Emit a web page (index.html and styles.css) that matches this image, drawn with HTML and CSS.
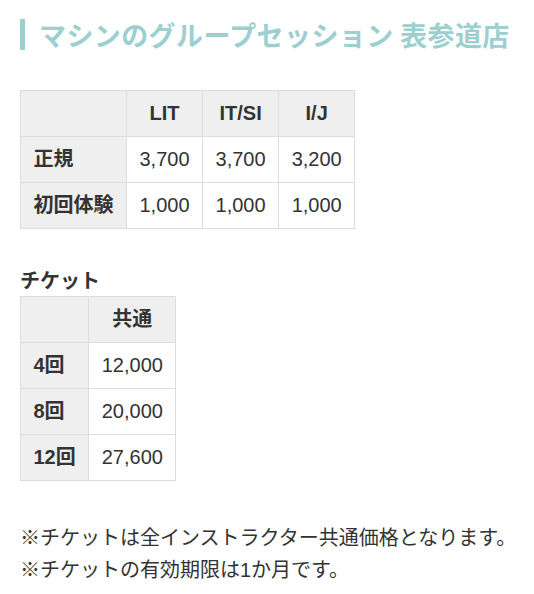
FILE: index.html
```html
<!DOCTYPE html>
<html lang="ja">
<head>
<meta charset="utf-8">
<link rel="stylesheet" href="styles.css">
</head>
<body>
<h1 class="title">マシンのグループセッション 表参道店</h1>
<table class="price price-main">
  <tr><th class="corner"></th><th>LIT</th><th>IT/SI</th><th>I/J</th></tr>
  <tr><th class="rowhead">正規</th><td>3,700</td><td>3,700</td><td>3,200</td></tr>
  <tr><th class="rowhead">初回体験</th><td>1,000</td><td>1,000</td><td>1,000</td></tr>
</table>
<h2 class="subtitle">チケット</h2>
<table class="price">
  <tr><th class="corner"></th><th>共通</th></tr>
  <tr><th class="rowhead">4回</th><td>12,000</td></tr>
  <tr><th class="rowhead">8回</th><td>20,000</td></tr>
  <tr><th class="rowhead">12回</th><td>27,600</td></tr>
</table>
<div class="notes">
  <p>※チケットは全インストラクター共通価格となります。</p>
  <p>※チケットの有効期限は1か月です。</p>
</div>
</body>
</html>
```
FILE: styles.css
```css
html, body {
  margin: 0;
  padding: 0;
  background: #fff;
}
body {
  padding: 19px 0 0 20px;
  color: #333;
  font-family: "Liberation Sans", "Noto Sans CJK JP", sans-serif;
  font-size: 20px;
}
.title {
  margin: 0 0 40px;
  font-family: "Noto Sans CJK JP", sans-serif;
  font-size: 27px;
  line-height: 31px;
  font-weight: 700;
  letter-spacing: 0.4px;
  white-space: nowrap;
  color: #9dcfd0;
  border-left: 5px solid #9dcfd0;
  padding-left: 14px;
}
.price {
  border-collapse: collapse;
  border: 1px solid #ddd;
}
.price th, .price td {
  border: 1px solid #ddd;
  padding: 10px 12.5px;
  line-height: 25px;
  font-size: 20px;
  white-space: nowrap;
}
.price th {
  background: #efefef;
  font-weight: 700;
  text-align: center;
}
.price th.rowhead {
  text-align: left;
}
.price td {
  text-align: center;
  background: #fff;
}
.subtitle {
  margin: 35px 0 0;
  font-family: "Noto Sans CJK JP", sans-serif;
  font-size: 20px;
  line-height: 32px;
  font-weight: 700;
}
.notes {
  margin-top: 41px;
}
.notes p {
  margin: 0;
  line-height: 32px;
  font-size: 20px;
  white-space: nowrap;
}
```
